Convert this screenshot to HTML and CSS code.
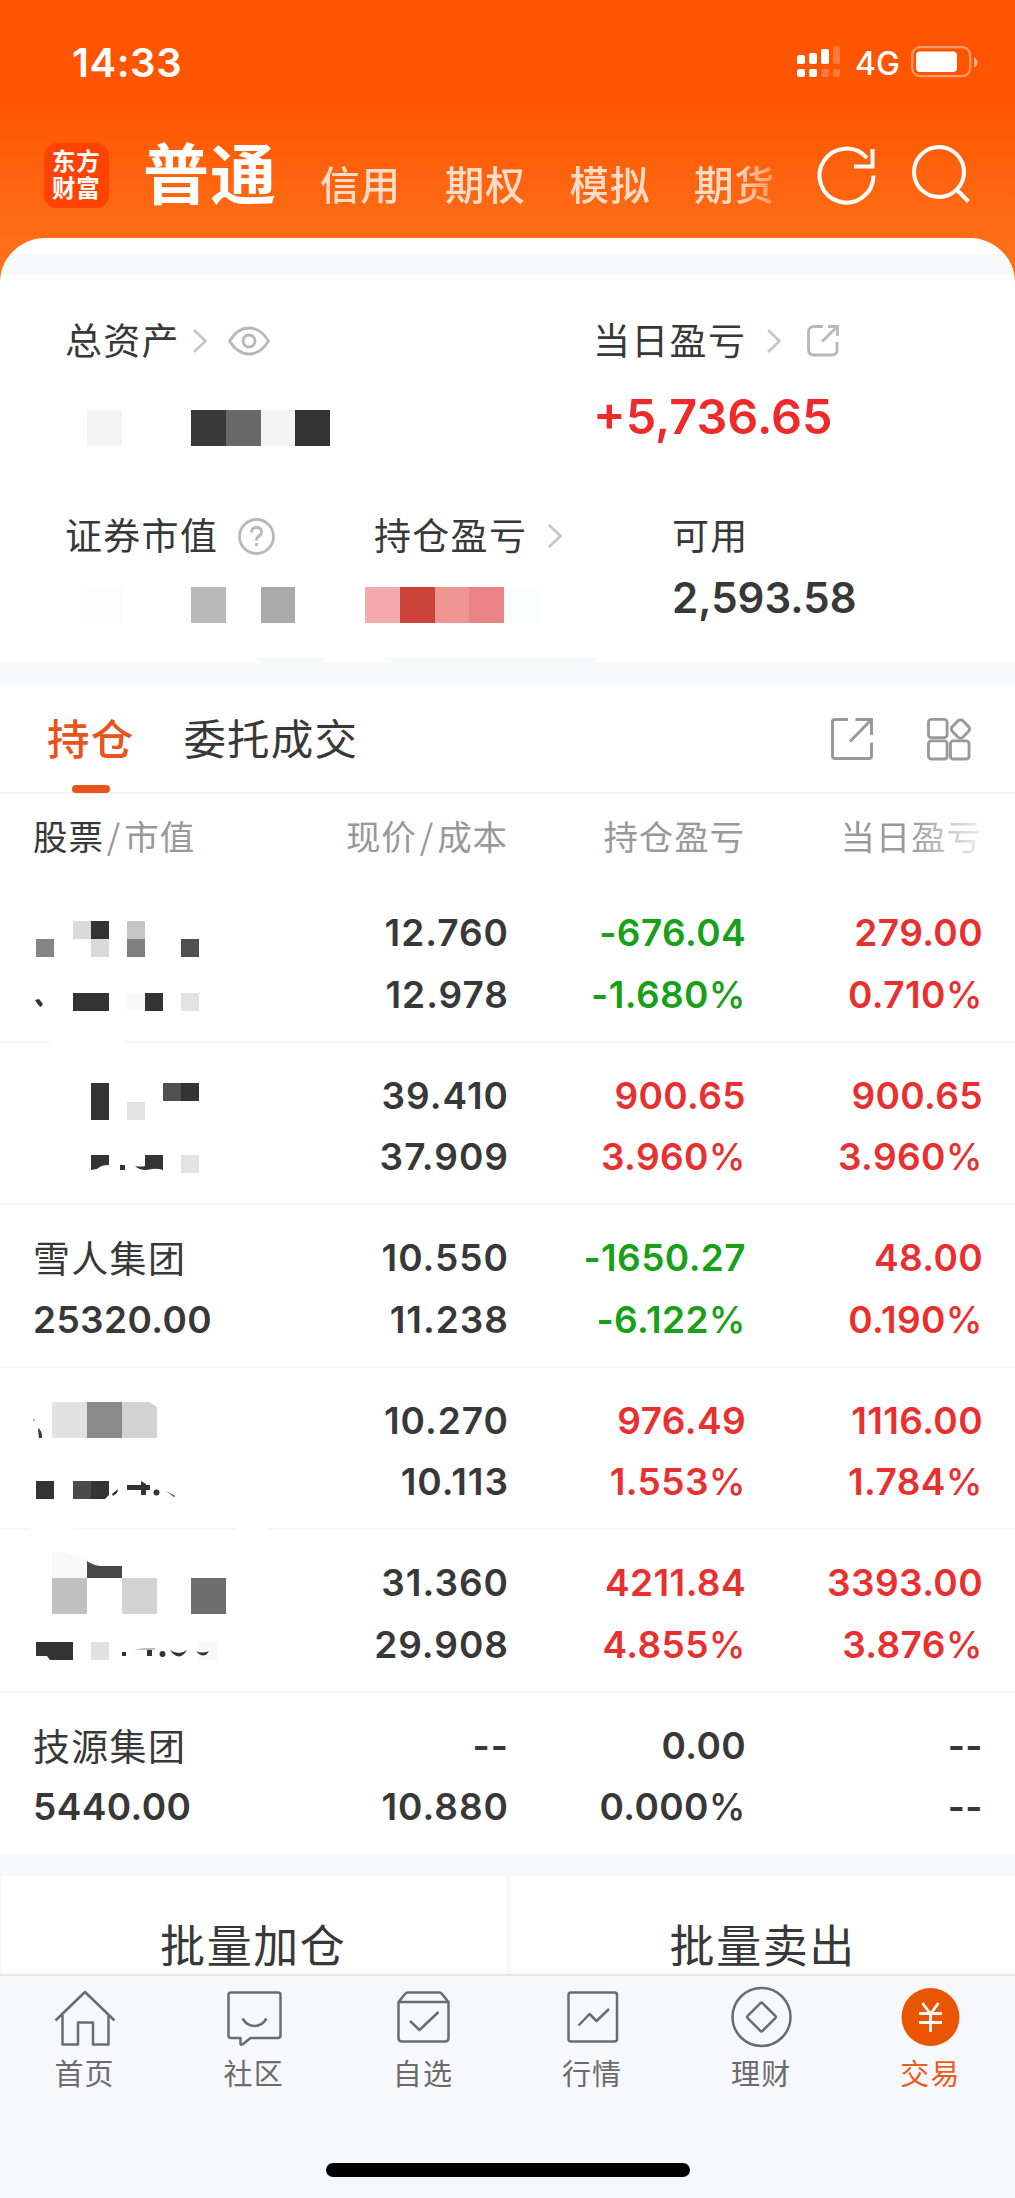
FILE: index.html
```html
<!DOCTYPE html>
<html lang="zh-CN">
<head>
<meta charset="utf-8">
<title>普通交易</title>
<link rel="stylesheet" href="styles.css">
</head>
<body>
<div class="app">
  <header class="top">
    <div class="status">
      <span class="clock">14:33</span>
      <span class="status-right">
        <svg class="signal" width="44" height="32" viewBox="0 0 44 32" fill="#fff">
          <rect x="0" y="9" width="8" height="9" rx="2"/><rect x="12" y="7" width="8" height="11" rx="2"/><rect x="24" y="3" width="8" height="15" rx="2"/><rect x="36" y="0" width="7" height="18" rx="2" opacity=".22"/>
          <rect x="0" y="23" width="8" height="8" rx="2"/><rect x="12" y="23" width="8" height="8" rx="2"/><rect x="24" y="23" width="8" height="8" rx="2" opacity=".22"/><rect x="36" y="23" width="7" height="8" rx="2" opacity=".22"/>
        </svg>
        <span class="net">4G</span>
        <svg width="67" height="32" viewBox="0 0 67 32">
          <rect x="1.2" y="1.2" width="58" height="29" rx="8" fill="none" stroke="#fff" stroke-opacity=".42" stroke-width="2.2"/>
          <rect x="5" y="5.5" width="41" height="20.5" rx="4" fill="#fff"/>
          <path d="M63 11.5q3.500 1.500 3.500 5t-3.500 5z" fill="#fff" opacity=".55"/>
        </svg>
      </span>
    </div>
    <div class="nav">
      <div class="logo">东方<br>财富</div>
      <div class="current">普通</div>
      <div class="modes"><span>信用</span><span>期权</span><span>模拟</span><span>期货</span></div>
      <svg class="refresh" width="60" height="60" viewBox="0 0 60 60" fill="none" stroke="#fff" stroke-width="4">
        <path d="M56.500 30.500A27 27 0 1 1 50 13"/><path d="M55.500 4v17.500H37"/>
      </svg>
      <svg width="60" height="60" viewBox="0 0 60 60" fill="none" stroke="#fff" stroke-width="4">
        <circle cx="28" cy="27" r="25"/><path d="M45 44l12.500 12.500"/>
      </svg>
    </div>
  </header>

  <main class="sheet">
    <div class="gap first"></div>
    <section class="summary">
      <div class="line upper">
        <div class="item total">
          <div class="label">总资产
            <svg class="chev" width="14" height="24" viewBox="0 0 14 24"><path d="M1 1l11.500 11L1 23"/></svg>
            <svg class="eye" width="42" height="30" viewBox="0 0 42 30"><path d="M1.500 15Q9.500 2 21 2t19.500 13Q32.500 28 21 28T1.500 15z"/><circle cx="21" cy="15" r="6"/></svg>
          </div>
          <svg class="mosaic" width="270" height="36" viewBox="65 410 270 36" shape-rendering="crispEdges">
            <path fill="#f3f3f3" d="M87 410h35v36H87zM261 410h35v36h-35z"/><path fill="#383838" d="M191 410h35v36h-35z"/><path fill="#686868" d="M226 410h35v36h-35z"/><path fill="#333" d="M295 410h35v36h-35z"/>
          </svg>
        </div>
        <div class="item">
          <div class="label">当日盈亏
            <svg class="chev wide" width="14" height="24" viewBox="0 0 14 24"><path d="M1 1l11.500 11L1 23"/></svg>
            <svg class="share" width="32" height="32" viewBox="0 0 32 32"><path d="M16 1.500H7q-5.500 0-5.500 5.500v17.500q0 5.500 5.500 5.500h17.500q5.500 0 5.500-5.500V17M15 16.500L30 2M21 1.500h9.500V11"/></svg>
          </div>
          <div class="profit">+5,736.65</div>
        </div>
      </div>
      <div class="line lower">
        <div class="item market">
          <div class="label">证券市值
            <svg class="help" width="37" height="37" viewBox="0 0 37 37"><circle cx="18.500" cy="18.500" r="17"/><path d="M13.500 14.500q0-5 5-5t5 4.500q0 2.500-2.500 4t-2.500 4.500M18.500 25v3"/></svg>
          </div>
          <svg class="mosaic" width="270" height="36" viewBox="65 587 270 36" shape-rendering="crispEdges">
            <path fill="#fcfcfc" d="M87 587h35v36H87z"/><path fill="#b9b9b9" d="M191 587h35v36h-35z"/><path fill="#aaa" d="M261 587h34v36h-34z"/>
          </svg>
        </div>
        <div class="item holding">
          <div class="label">持仓盈亏
            <svg class="chev wide" width="14" height="24" viewBox="0 0 14 24"><path d="M1 1l11.500 11L1 23"/></svg>
          </div>
          <svg class="mosaic" width="210" height="36" viewBox="374 587 210 36" shape-rendering="crispEdges">
            <path fill="#f4aab0" d="M365 587h35v36h-35z"/><path fill="#cb4238" d="M400 587h35v36h-35z"/><path fill="#ee9591" d="M435 587h34v36h-34z"/><path fill="#eb8286" d="M469 587h35v36h-35z"/><path fill="#f9fefc" d="M504 587h34v36h-34z"/>
          </svg>
        </div>
        <div class="item">
          <div class="label">可用</div>
          <div class="cash">2,593.58</div>
        </div>
      </div>
    </section>
    <div class="gap">
      <svg class="ripple" width="1015" height="6" viewBox="0 0 1015 6"><path d="M256 0h70l-6 6h-58zM380 0h218l-10 6H400z" fill="#f7f8fa"/></svg>
    </div>

    <section class="tabs">
      <div class="tab active">持仓</div>
      <div class="tab">委托成交</div>
      <svg class="tool export" width="42" height="42" viewBox="0 0 42 42"><path d="M17 1.500H4q-2.500 0-2.500 2.500v34q0 2.500 2.500 2.500h34q2.500 0 2.500-2.500V24.500M24.500 1.500h16V17M40 2L19 23.500"/></svg>
      <svg class="tool" width="44" height="42" viewBox="0 0 46 44"><rect x="1.500" y="1.500" width="19.500" height="19" rx="3"/><rect x="1.500" y="24" width="19.500" height="19" rx="3"/><rect x="24.500" y="24" width="19.500" height="19" rx="3"/><rect x="27.200" y="3.700" width="15.600" height="15.600" rx="3.500" transform="rotate(45 35 11.500)"/></svg>
    </section>

    <section class="table">
      <div class="head">
        <div class="first-col"><b>股票</b><i>/</i>市值</div><div>现价<i>/</i>成本</div><div>持仓盈亏</div><div class="fade">当日盈亏</div>
      </div>
      <div class="row">
        <div class="stock">
          <svg class="mask" width="237" height="162" viewBox="0 879 237 162">
            <g shape-rendering="crispEdges"><path fill="#858585" d="M36 939h18v18H36z"/><path fill="#dadada" d="M73 921h18v18H73zM91 939h18v18H91z"/><path fill="#333" d="M91 921h18v18H91zM73 993h36v18H73zM145 993h18v18h-18z"/><path fill="#c6c6c6" d="M127 921h18v18h-18z"/><path fill="#808080" d="M127 939h18v18h-18z"/><path fill="#505050" d="M181 939h18v18h-18z"/><path fill="#f9f9f9" d="M127 993h18v18h-18z"/><path fill="#e3e3e3" d="M181 993h18v18h-18z"/></g>
            <path fill="#333" d="M35 1000l4-1 4 5-2 3q-2 0-6-7z"/><path fill="#fff" d="M50 1039h75v5H50z"/>
          </svg>
        </div>
        <div class="price"><p>12.760</p><p>12.978</p></div><div class="down"><p>-676.04</p><p>-1.680<s>%</s></p></div><div class="up"><p>279.00</p><p>0.710<s>%</s></p></div>
      </div>
      <div class="row">
        <div class="stock">
          <svg class="mask" width="237" height="162" viewBox="0 1042 237 162">
            <g shape-rendering="crispEdges"><path fill="#333" d="M91 1083h18v37H91zM181 1083h18v18h-18z"/><path fill="#e3e3e3" d="M127 1102h18v18h-18zM181 1155h18v18h-18z"/><path fill="#505050" d="M163 1083h18v18h-18z"/></g>
            <path fill="#333" d="M91 1155h18v10q-8 0-12 4l-6 1zM120 1165h5v5h-5zM145 1155h18v15q-6-2-11-1-11 3-17-3 6 1 10 0z"/>
          </svg>
        </div>
        <div class="price"><p>39.410</p><p>37.909</p></div><div class="up"><p>900.65</p><p>3.960<s>%</s></p></div><div class="up"><p>900.65</p><p>3.960<s>%</s></p></div>
      </div>
      <div class="row">
        <div class="stock"><p class="name">雪人集团</p><p>25320.00</p></div>
        <div class="price"><p>10.550</p><p>11.238</p></div><div class="down"><p>-1650.27</p><p>-6.122<s>%</s></p></div><div class="up"><p>48.00</p><p>0.190<s>%</s></p></div>
      </div>
      <div class="row">
        <div class="stock">
          <svg class="mask" width="237" height="162" viewBox="0 1367 237 162">
            <path fill="#e2e2e2" d="M52 1402h35v36H52z"/><path fill="#8a8a8a" d="M87 1402h35v36H87z"/><path fill="#d3d3d3" d="M122 1402h27l8 5v31h-35z"/>
            <g shape-rendering="crispEdges"><path fill="#333" d="M36 1481h18v18H36z"/><path fill="#4a4a4a" d="M73 1481h18v18H73z"/></g>
            <path fill="#333" d="M91 1481h18v14l-4 4H91zM38 1428q4 2 4 10h-3zM33 1418l2 3h-1zM112 1494l6-5-1 4-4 3zM127 1485h14v-4l5 3v1h4v5h-4v5h-5v-5h-14zM166 1491l9 5-1 1z"/><circle cx="156.500" cy="1492.500" r="3" fill="#333"/>
            <path fill="#fff" d="M30 1527h43v5H30zM235 1527h33v5h-33z"/>
          </svg>
        </div>
        <div class="price"><p>10.270</p><p>10.113</p></div><div class="up"><p>976.49</p><p>1.553<s>%</s></p></div><div class="up"><p>1116.00</p><p>1.784<s>%</s></p></div>
      </div>
      <div class="row">
        <div class="stock">
          <svg class="mask" width="237" height="162" viewBox="0 1530 237 162">
            <path fill="#f8f8f8" d="M52 1553h10l25 9v17H52z"/><path fill="#484848" d="M87 1562q7 5 15 5h20v12H87z"/><path fill="#c1c1c1" d="M52 1579h35v36H52z"/><path fill="#d3d3d3" d="M122 1579h35v36h-35z"/><path fill="#6e6e6e" d="M191 1579h35v36h-35z"/>
            <path fill="#e2e2e2" d="M91 1643h18v18H91z"/><path fill="#f8f8f8" d="M199 1643h18v18h-18z"/>
            <path fill="#333" d="M36 1643h37v18H50l-3-4H36zM122 1653h4v4h-4zM147 1651h5v6h-5zM170 1651q9 6 17 0-8 13-17 0zM196 1652q6 3 13 0-5 9-13 0z"/><path fill="#bbb" d="M134 1651l10-2h11v2z"/><circle cx="162.500" cy="1655" r="3" fill="#333"/>
          </svg>
        </div>
        <div class="price"><p>31.360</p><p>29.908</p></div><div class="up"><p>4211.84</p><p>4.855<s>%</s></p></div><div class="up"><p>3393.00</p><p>3.876<s>%</s></p></div>
      </div>
      <div class="row last">
        <div class="stock"><p class="name">技源集团</p><p>5440.00</p></div>
        <div class="price"><p>--</p><p>10.880</p></div><div><p>0.00</p><p>0.000<s>%</s></p></div><div><p>--</p><p>--</p></div>
      </div>
    </section>
    <div class="gap"></div>
    <section class="batch"><div>批量加仓</div><div>批量卖出</div></section>
  </main>

  <nav class="bar">
    <div class="dock">
      <a><svg viewBox="0 0 60 60"><path d="M.5 33.500L30 5l29.500 28.500M7.500 28v29.500H23v-22h15v22h15.500V28"/></svg><span>首页</span></a>
      <a><svg viewBox="0 0 60 60"><path d="M7 5.500h47q2.500 0 2.500 2.500v40.500q0 2.500-2.500 2.500H26.500l-8 6.500q-2 1-2-1V51H7q-2.500 0-2.500-2.500V8q0-2.500 2.500-2.500zM18.500 31.500Q23 39 30.500 39t12-7.500"/></svg><span>社区</span></a>
      <a><svg viewBox="0 0 60 60"><path d="M5.500 15L12 7q1-1.500 3-1.500h31q2 0 3 1.500l6.500 8v36q0 3.500-3.500 3.500H9q-3.500 0-3.500-3.500zM5.500 15h50M17 34l9.500 9 19-18"/></svg><span>自选</span></a>
      <a><svg viewBox="0 0 60 60"><rect x="6.500" y="5.500" width="48.500" height="49" rx="2.500"/><path d="M16.500 38.500l11-11.500 7 7L47 22"/></svg><span>行情</span></a>
      <a><svg viewBox="0 0 60 60"><circle cx="30.500" cy="30" r="29"/><rect x="20" y="19.500" width="21" height="21" rx="1.500" transform="rotate(45 30.500 30)"/></svg><span>理财</span></a>
      <a class="on"><svg viewBox="0 0 60 60"><circle cx="30.500" cy="30" r="29" fill="#ea5504" stroke="none"/><path stroke="#fff" stroke-width="2.800" d="M22.500 16l8 11 8-11M30.500 27v18M19 26.500h23M19 35.500h23"/></svg><span>交易</span></a>
    </div>
    <div class="home"></div>
  </nav>
</div>
</body>
</html>
```
FILE: styles.css
```css
* { box-sizing: border-box; margin: 0; padding: 0; }
body {
  width: 1015px;
  height: 2198px;
  overflow: hidden;
  color: #383838;
  font-family: "Noto Sans CJK SC", sans-serif;
  background: #fff;
}
svg { display: block; flex: none; overflow: visible; }
.app { display: flex; flex-direction: column; height: 2198px; background: linear-gradient(#ff5500 100px, #ff6e18 238px, #ff6e18 300px); }

.top { height: 238px; color: #fff; }
.status { display: flex; justify-content: space-between; align-items: center; height: 124px; padding: 0 37px 0 72px; font-family: Inter, sans-serif; }
.clock { font-size: 40px; font-weight: 600; letter-spacing: .6px; }
.status-right { display: flex; align-items: center; }
.net { width: 50px; margin: 2px 6px 0 14px; font-size: 32px; font-weight: 500; }
.nav { display: flex; height: 114px; padding-left: 44px; }
.logo { width: 65px; height: 65px; margin-top: 19px; padding: 4px 0 0 8px; border-radius: 13px; background: #ff4305; font-size: 23.5px; font-weight: 700; line-height: 27px; letter-spacing: .8px; }
.current { width: 177px; margin-left: 34px; font-size: 66px; font-weight: 700; line-height: 92px; letter-spacing: 1px; }
.modes { display: flex; width: 456px; margin-top: 32px; font-size: 39.5px; font-weight: 500; line-height: 54px; color: #ffdcc8; letter-spacing: 1px; -webkit-mask-image: linear-gradient(90deg, #000 415px, rgba(0,0,0,.4) 456px); mask-image: linear-gradient(90deg, #000 415px, rgba(0,0,0,.4) 456px); }
.modes span { width: 124.7px; flex: none; }
.refresh { margin-right: 34px; margin-left: 41px; }
.nav > svg { margin-top: 21px; }

.sheet { height: 1736px; overflow: hidden; background: #fff; border-radius: 45px 45px 0 0; }
.gap { position: relative; height: 22px; background: #f7f8fa; }
.gap.first { height: 21px; margin-top: 16px; }
.ripple { position: absolute; left: 0; top: -5px; }

.summary { height: 388px; padding: 40px 0 0 65px; }
.line { display: flex; }
.upper { height: 195px; }
.label { display: flex; align-items: center; height: 48px; font-size: 37px; line-height: 48px; letter-spacing: 1.3px; }
.label svg { fill: none; stroke: #b8b8b8; stroke-width: 2.8; margin-top: 4px; }
.total { width: 528px; }
.market { width: 309px; }
.holding { width: 298px; }
.label .chev { margin-left: 13px; stroke: #c4c4c4; stroke-width: 2.6; }
.label .chev.wide { margin-left: 21px; }
.eye { margin-left: 21px; }
.share { margin-left: 26px; }
.help { margin-left: 20px; }
.mosaic { margin-top: 47px; }
.lower .mosaic { margin-top: 29px; }
.profit, .cash { font-family: Inter, sans-serif; font-weight: 600; }
.profit { margin-top: 25px; color: #ee2a2a; font-size: 48.5px; line-height: 58px; }
.cash { margin-top: 14px; font-size: 42px; line-height: 52px; }

.tabs { display: flex; height: 109px; padding-left: 47px; border-bottom: 2px solid #f4f4f4; }
.tab { position: relative; margin-right: 49px; font-size: 42.5px; line-height: 104px; letter-spacing: 1.2px; }
.tab.active { color: #e8541a; font-weight: 500; }
.tab.active::after { content: ""; position: absolute; left: 25px; top: 100px; width: 38px; height: 8px; border-radius: 4px; background: #e8541a; }
.tool { margin-top: 33px; fill: none; stroke: #999; stroke-width: 3; }
.tool.export { margin-left: auto; margin-right: 54px; }
.tool:last-child { margin-right: 44px; }

.head, .row { display: grid; grid-template-columns: 238px repeat(3, 237px); padding: 0 33px; text-align: right; }
.head { height: 86px; color: #999; font-size: 34.5px; line-height: 83px; letter-spacing: .9px; }
.head b { color: #383838; font-weight: 400; }
.head i { font-style: normal; padding: 0 3px; }
.head .first-col { text-align: left; }
.fade { -webkit-mask-image: linear-gradient(90deg, #000 165px, rgba(0,0,0,.15) 237px); mask-image: linear-gradient(90deg, #000 165px, rgba(0,0,0,.15) 237px); }
.row { height: 162.5px; padding-top: 22px; border-bottom: 2px solid #f6f6f6; font: 600 37px/61.5px Inter, sans-serif; letter-spacing: .4px; }
.row p { white-space: nowrap; height: 61.5px; }
.row div + div p { margin-right: -1px; }
.row .price { letter-spacing: 1px; }
.row s { text-decoration: none; font-weight: 500; }
.row.last { height: 161.5px; border-bottom: 0; }
.stock { text-align: left; }
.stock .name { font: 400 37px/61.5px "Noto Sans CJK SC", sans-serif; letter-spacing: 1.3px; }
.mask { margin: -23px 0 0 -33px; }
.up { color: #e93030; }
.down { color: #18a018; }

.batch { display: grid; grid-template-columns: 1fr 1fr; gap: 5px; height: 100px; padding-left: 1px; background: #f7f8fa; font-size: 45px; line-height: 135px; letter-spacing: 1.6px; text-align: center; }
.batch div { background: #fff; }

.bar { height: 224px; border-top: 2px solid #e6e6e8; background: #f7f8fb; }
.dock { display: grid; grid-template-columns: repeat(6, 1fr); height: 187px; padding-top: 11px; }
.dock a { display: flex; flex-direction: column; align-items: center; color: #6b6b6b; font-size: 29px; letter-spacing: 1.2px; line-height: 44px; }
.dock svg { width: 60px; height: 60px; margin-bottom: 3px; fill: none; stroke: #6c6c6c; stroke-width: 2.5; stroke-linejoin: round; }
.dock .on { color: #ea5b20; }
.home { width: 364px; height: 14px; margin: 0 auto; border-radius: 7px; background: #000; }
```
